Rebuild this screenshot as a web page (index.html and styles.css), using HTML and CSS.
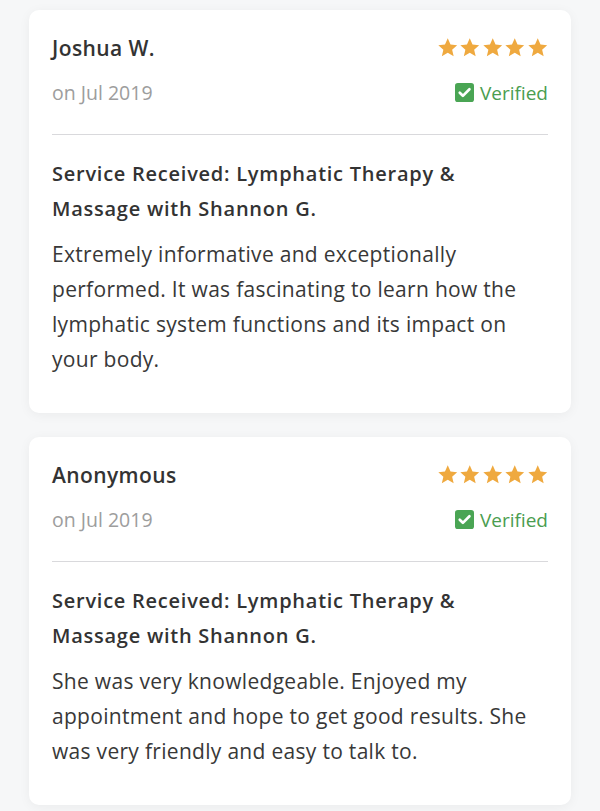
FILE: index.html
```html
<!DOCTYPE html>
<html>
<head>
<meta charset="utf-8">
<meta name="viewport" content="width=device-width, initial-scale=1.0">
<title>Reviews</title>
<link rel="stylesheet" href="styles.css">
</head>
<body>

<div class="review">
  <div class="row">
    <span class="name">Joshua W.</span>
    <span class="stars">
      <svg viewBox="0 0 24 24"><path d="M12 1.5l3.1 6.9 7.4.7-5.6 5 1.7 7.4L12 17.6l-6.6 3.9 1.7-7.4-5.6-5 7.4-.7z"/></svg>
      <svg viewBox="0 0 24 24"><path d="M12 1.5l3.1 6.9 7.4.7-5.6 5 1.7 7.4L12 17.6l-6.6 3.9 1.7-7.4-5.6-5 7.4-.7z"/></svg>
      <svg viewBox="0 0 24 24"><path d="M12 1.5l3.1 6.9 7.4.7-5.6 5 1.7 7.4L12 17.6l-6.6 3.9 1.7-7.4-5.6-5 7.4-.7z"/></svg>
      <svg viewBox="0 0 24 24"><path d="M12 1.5l3.1 6.9 7.4.7-5.6 5 1.7 7.4L12 17.6l-6.6 3.9 1.7-7.4-5.6-5 7.4-.7z"/></svg>
      <svg viewBox="0 0 24 24"><path d="M12 1.5l3.1 6.9 7.4.7-5.6 5 1.7 7.4L12 17.6l-6.6 3.9 1.7-7.4-5.6-5 7.4-.7z"/></svg>
    </span>
  </div>
  <div class="row meta">
    <span class="date">on Jul 2019</span>
    <span class="verified">
      <svg viewBox="0 0 20 20"><rect width="20" height="20" rx="3"/><path d="M5 10.3l3.3 3.2L15.2 6.6"/></svg>
      Verified
    </span>
  </div>
  <div class="rule"></div>
  <p class="service">Service Received: Lymphatic Therapy &amp; Massage with Shannon G.</p>
  <p class="text">Extremely informative and exceptionally performed. It was fascinating to learn how the lymphatic system functions and its impact on your body.</p>
</div>

<div class="review">
  <div class="row">
    <span class="name">Anonymous</span>
    <span class="stars">
      <svg viewBox="0 0 24 24"><path d="M12 1.5l3.1 6.9 7.4.7-5.6 5 1.7 7.4L12 17.6l-6.6 3.9 1.7-7.4-5.6-5 7.4-.7z"/></svg>
      <svg viewBox="0 0 24 24"><path d="M12 1.5l3.1 6.9 7.4.7-5.6 5 1.7 7.4L12 17.6l-6.6 3.9 1.7-7.4-5.6-5 7.4-.7z"/></svg>
      <svg viewBox="0 0 24 24"><path d="M12 1.5l3.1 6.9 7.4.7-5.6 5 1.7 7.4L12 17.6l-6.6 3.9 1.7-7.4-5.6-5 7.4-.7z"/></svg>
      <svg viewBox="0 0 24 24"><path d="M12 1.5l3.1 6.9 7.4.7-5.6 5 1.7 7.4L12 17.6l-6.6 3.9 1.7-7.4-5.6-5 7.4-.7z"/></svg>
      <svg viewBox="0 0 24 24"><path d="M12 1.5l3.1 6.9 7.4.7-5.6 5 1.7 7.4L12 17.6l-6.6 3.9 1.7-7.4-5.6-5 7.4-.7z"/></svg>
    </span>
  </div>
  <div class="row meta">
    <span class="date">on Jul 2019</span>
    <span class="verified">
      <svg viewBox="0 0 20 20"><rect width="20" height="20" rx="3"/><path d="M5 10.3l3.3 3.2L15.2 6.6"/></svg>
      Verified
    </span>
  </div>
  <div class="rule"></div>
  <p class="service">Service Received: Lymphatic Therapy &amp; Massage with Shannon G.</p>
  <p class="text">She was very knowledgeable. Enjoyed my appointment and hope to get good results. She was very friendly and easy to talk to.</p>
</div>

</body>
</html>
```

FILE: styles.css
```css
body {
  margin:0;
  padding:10px 29px;
  background:#f6f7f8;
  font-family:'Open Sans', 'Liberation Sans', sans-serif;
  color:#333;
}

p {
  margin:0;
}

.review {
  background:#fff;
  border-radius:10px;
  padding:20px 23px 36px;
  margin-bottom:24px;
  box-shadow:0 2px 12px rgba(0,0,0,0.05);
}

.row {
  display:flex;
  justify-content:space-between;
  align-items:center;
  height:35px;
}

.meta {
  margin-top:10px;
}

.name {
  font-size:21px;
  font-weight:600;
  letter-spacing:0.4px;
  color:#333;
}

.stars {
  display:flex;
  gap:1px;
}

.stars svg {
  width:21.5px;
  height:21.5px;
  fill:#efa93f;
}

.date {
  font-size:19.5px;
  color:#9d9d9d;
}

.verified {
  display:flex;
  align-items:center;
  gap:6px;
  font-size:19px;
  color:#4a9d50;
}

.verified svg {
  width:19px;
  height:19px;
}

.verified rect {
  fill:#4aa554;
}

.verified path {
  fill:none;
  stroke:#fff;
  stroke-width:2.8;
  stroke-linecap:round;
  stroke-linejoin:round;
}

.rule {
  height:1px;
  background:#d9d9dc;
  margin:24px 0 21px;
}

.service {
  font-size:20px;
  font-weight:600;
  letter-spacing:0.75px;
  line-height:35px;
  color:#333;
}

.text {
  font-size:21px;
  letter-spacing:0.3px;
  line-height:35px;
  margin-top:11px;
  color:#383838;
}
```
